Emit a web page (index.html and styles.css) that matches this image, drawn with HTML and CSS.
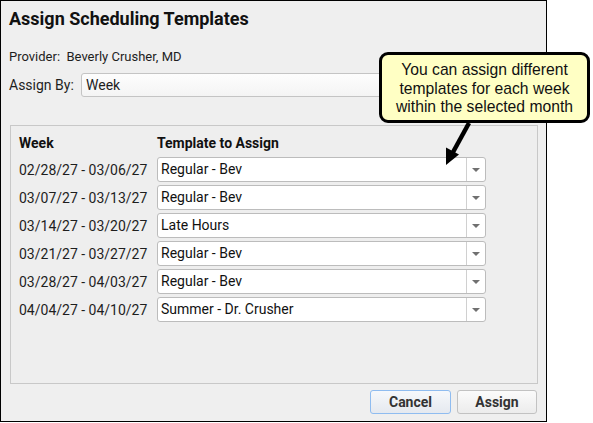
FILE: index.html
```html
<!DOCTYPE html>
<html>
<head>
<meta charset="utf-8">
<link rel="stylesheet" href="styles.css">
</head>
<body>
<div class="dialog">
  <div class="title">Assign Scheduling Templates</div>
  <div class="provider">Provider:&nbsp; Beverly Crusher, MD</div>
  <div class="assign-by">
    <span class="label">Assign By:</span>
    <div class="by-select">Week</div>
  </div>
  <div class="panel">
    <div class="row head">
      <span class="week">Week</span>
      <span class="tmpl">Template to Assign</span>
    </div>
    <div class="row">
      <span class="week">02/28/27 - 03/06/27</span>
      <div class="select"><span class="val">Regular - Bev</span><span class="drop"><i></i></span></div>
    </div>
    <div class="row">
      <span class="week">03/07/27 - 03/13/27</span>
      <div class="select"><span class="val">Regular - Bev</span><span class="drop"><i></i></span></div>
    </div>
    <div class="row">
      <span class="week">03/14/27 - 03/20/27</span>
      <div class="select"><span class="val">Late Hours</span><span class="drop"><i></i></span></div>
    </div>
    <div class="row">
      <span class="week">03/21/27 - 03/27/27</span>
      <div class="select"><span class="val">Regular - Bev</span><span class="drop"><i></i></span></div>
    </div>
    <div class="row">
      <span class="week">03/28/27 - 04/03/27</span>
      <div class="select"><span class="val">Regular - Bev</span><span class="drop"><i></i></span></div>
    </div>
    <div class="row">
      <span class="week">04/04/27 - 04/10/27</span>
      <div class="select"><span class="val">Summer - Dr. Crusher</span><span class="drop"><i></i></span></div>
    </div>
  </div>
  <div class="buttons">
    <button class="btn cancel">Cancel</button>
    <button class="btn">Assign</button>
  </div>
</div>
<div class="callout">You can assign different<br>templates for each week<br>within the selected month</div>
<svg class="arrow" width="593" height="423" viewBox="0 0 593 423">
  <line x1="469" y1="123" x2="452" y2="154" stroke="#000" stroke-width="4.5"/>
  <polygon points="446,165 459,154.5 446,147.5" fill="#000"/>
</svg>
</body>
</html>
```
FILE: styles.css
```css
html, body {
  margin: 0;
  padding: 0;
  background: #ffffff;
}
body {
  width: 593px;
  height: 423px;
  overflow: hidden;
  position: relative;
  font-family: Roboto, "Liberation Sans", sans-serif;
  font-size: 13px;
  color: #1e1e1e;
}
.dialog {
  box-sizing: border-box;
  width: 547px;
  height: 422px;
  border: 1px solid #000;
  background: #efefef;
  padding: 8px 9px 0 8px;
  display: flex;
  flex-direction: column;
}
.title {
  font-size: 18px;
  font-weight: bold;
  line-height: 20px;
  height: 20px;
  color: #111;
}
.provider {
  margin-top: 20px;
  line-height: 16px;
  height: 16px;
}
.assign-by {
  margin-top: 8px;
  display: flex;
  align-items: center;
  height: 24px;
}
.assign-by .label {
  width: 72px;
  font-size: 14px;
}
.by-select {
  flex: 1;
  box-sizing: border-box;
  height: 24px;
  border: 1px solid #c4c4c4;
  border-radius: 3px;
  background: linear-gradient(#fdfdfd, #f4f4f4);
  padding-left: 4px;
  line-height: 22px;
  font-size: 14px;
}
.panel {
  box-sizing: border-box;
  margin: 28px -1px 0 1px;
  height: 259px;
  border: 1px solid #c8c8c8;
  background: #eeeeee;
  padding: 9px 0 0 8px;
  display: flex;
  flex-direction: column;
  gap: 3px;
  font-size: 14px;
}
.row {
  display: flex;
  align-items: center;
  height: 25px;
}
.row.head {
  height: 16px;
  margin-bottom: 3px;
  font-weight: bold;
  color: #111;
}
.week {
  width: 138px;
}
.select {
  box-sizing: border-box;
  width: 329px;
  height: 25px;
  border: 1px solid #bcbcbc;
  border-radius: 3px;
  background: #fff;
  display: flex;
}
.select .val {
  flex: 1;
  padding-left: 3px;
  line-height: 23px;
  color: #111;
}
.select .drop {
  width: 18px;
  border-left: 1px solid #d0d0d0;
  display: flex;
  align-items: center;
  justify-content: center;
}
.select .drop i {
  width: 0;
  height: 0;
  border-left: 4px solid transparent;
  border-right: 4px solid transparent;
  border-top: 4px solid #707070;
}
.buttons {
  margin-top: 6px;
  display: flex;
  justify-content: flex-end;
  gap: 6px;
}
.btn {
  box-sizing: border-box;
  height: 24px;
  width: 80px;
  font-family: Roboto, "Liberation Sans", sans-serif;
  font-size: 14px;
  font-weight: bold;
  color: #333;
  border: 1px solid #c2c2c2;
  border-radius: 3px;
  background: linear-gradient(#fbfbfb, #ececec);
  padding: 0;
}
.btn.cancel {
  width: 81px;
  border-color: #8fbcf0;
  background: linear-gradient(#f6f8fb, #e5e9ef);
}
.callout {
  position: absolute;
  left: 379px;
  top: 52px;
  box-sizing: border-box;
  width: 211px;
  height: 71px;
  border: 3px solid #000;
  border-radius: 9px;
  background: #ffffc4;
  font-family: "Liberation Sans", Arial, sans-serif;
  font-size: 15.7px;
  line-height: 18.5px;
  color: #111;
  text-align: center;
  padding-top: 6px;
}
.arrow {
  position: absolute;
  left: 0;
  top: 0;
}
```
